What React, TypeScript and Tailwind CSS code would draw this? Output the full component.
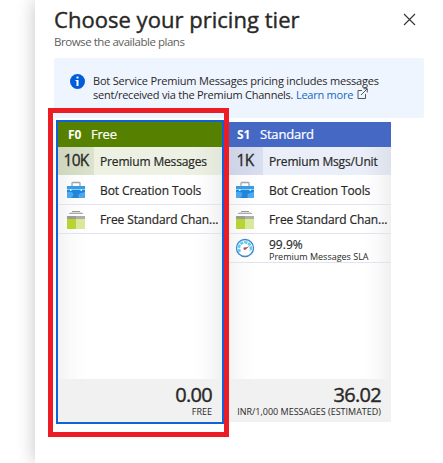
import type { ReactNode } from "react";

function Toolbox() {
  return (
    <svg width="20" height="18" viewBox="0 0 20 18" className="block">
      <path d="M6 5V2.2Q6 1.5 6.8 1.5H13.2Q14 1.5 14 2.2V5" fill="none" stroke="#a2a5a8" strokeWidth="1.3" />
      <rect x="1" y="5" width="18" height="12" fill="#2384d8" />
      <rect x="1" y="5" width="18" height="3" fill="#379bea" />
      <rect x="1" y="8" width="18" height="1" fill="#83d6fb" />
      <path d="M1 11Q5 10 7 12Q8 15 5 17H1Z" fill="#4ba9f1" />
      <path d="M13 17Q11 13 15 12L19 11V17Z" fill="#4ba9f1" />
      <path d="M4 8h1.5v2H4zM14.5 8H16v2h-1.5z" fill="#c7edff" />
    </svg>
  );
}

function Channels() {
  return (
    <svg width="20" height="19" viewBox="0 0 20 19" className="block">
      <rect x="6" y="1" width="8" height="1" fill="#999" />
      <rect x="4" y="2" width="12" height="1" fill="#ddd" />
      <rect x="3" y="3" width="14" height="1" fill="#aaa" />
      <rect x="1" y="6" width="18" height="3" fill="#9b9c96" />
      <rect x="10" y="6" width="9" height="3" fill="#adaea8" />
      <rect x="1" y="9" width="9" height="10" fill="#b8d432" />
      <rect x="10" y="9" width="9" height="10" fill="#d8e998" />
    </svg>
  );
}

function Gauge() {
  return (
    <svg width="20" height="20" viewBox="0 0 20 20" className="block">
      <circle cx="10" cy="10" r="8.5" fill="#fff" stroke="#3a86cf" strokeWidth="1.3" />
      <path d="M5.1 13.8A6 6 0 1 1 15.2 13" fill="none" stroke="#5ccdee" strokeWidth="2.6" strokeDasharray="3.2 .9" />
      <path d="M9 10.2L14.7 8L10.6 11.6Z" fill="#d83a43" />
      <circle cx="9.8" cy="10.6" r="1.3" fill="#b64b5a" />
    </svg>
  );
}

function Feature({ icon, children }: { icon: ReactNode; children: ReactNode }) {
  return (
    <div className="flex h-[29px] items-center border-b border-[#e3e3f0]">
      <div className="flex w-9 shrink-0 justify-center">{icon}</div>
      <div className="ml-[6px] whitespace-nowrap text-[12px] leading-4">{children}</div>
    </div>
  );
}

type TierProps = {
  code: string;
  name: string;
  header: string;
  band: string;
  quantityBand: string;
  quantity: string;
  unit: string;
  price: string;
  note: string;
  sla?: boolean;
  selected?: boolean;
};

function Tier(p: TierProps) {
  return (
    <section className={`flex h-[300px] w-[164px] shrink-0 flex-col bg-white ${p.selected ? "outline-2 outline-[#0f62d8]" : ""}`}>
      <header className={`flex h-[25px] shrink-0 items-center pl-[10px] text-white ${p.header}`}>
        <span className="w-[23px] pt-px text-[12px] font-bold">{p.code}</span>
        <span className="pt-px text-[13px] tracking-[-0.2px] [-webkit-text-stroke:0.2px]">{p.name}</span>
      </header>
      <div className="flex-1 bg-[linear-gradient(90deg,#f3f3f3_0,#fafafa_12px,#fff_28px,#fff_136px,#fafafa_150px,#f0f0f0_100%)]">
        <div className={`mb-px flex h-7 items-center ${p.band}`}>
          <div className={`flex h-full w-9 items-center justify-center text-[15.5px] tracking-[-0.8px] [-webkit-text-stroke:0.3px] ${p.quantityBand}`}>{p.quantity}</div>
          <div className="ml-[6px] whitespace-nowrap pt-px text-[12px] tracking-[-0.15px] [-webkit-text-stroke:0.2px]">{p.unit}</div>
        </div>
        <Feature icon={<Toolbox />}>
          <div className="pt-px tracking-[-0.1px] [-webkit-text-stroke:0.2px]">Bot Creation Tools</div>
        </Feature>
        <Feature icon={<Channels />}>
          <div className="pt-px tracking-[-0.1px] [-webkit-text-stroke:0.2px]">Free Standard Chan...</div>
        </Feature>
        {p.sla && (
          <Feature icon={<Gauge />}>
            <div className="pt-[3px] text-[12px] leading-[13px] [-webkit-text-stroke:0.15px]">99.9%</div>
            <div className="text-[9px] leading-[11px]">Premium Messages SLA</div>
          </Feature>
        )}
      </div>
      <footer className="flex h-[43px] shrink-0 flex-col items-end whitespace-nowrap bg-[#f1f1f1] pr-[10px] pt-[4px]">
        <div className="text-[20px] leading-[24px] tracking-[-0.7px] [-webkit-text-stroke:0.4px]">{p.price}</div>
        <div className="text-[9px] leading-[10px]">{p.note}</div>
      </footer>
    </section>
  );
}

export default function App() {
  return (
    <div className="relative h-[463px] w-[443px] overflow-hidden bg-white pl-[35px] font-['Open_Sans','Noto_Sans',sans-serif] text-[#292827]">
      <main className="h-full bg-white pl-[19px] shadow-[0_0_18px_rgba(0,0,0,0.24)]">
        <div className="flex h-[33px] items-start justify-between pr-[27px] pt-1">
          <h1 className="whitespace-nowrap text-[22px] leading-[30px] tracking-[0.03px] [-webkit-text-stroke:0.4px]">Choose your pricing tier</h1>
          <svg width="13" height="13" viewBox="0 0 13 13" className="mt-[9px]">
            <path d="M1 1L12 12M12 1L1 12" stroke="#333" strokeWidth="1.1" />
          </svg>
        </div>
        <p className="h-[25px] text-[11.5px] leading-[18px] tracking-[-0.46px] text-[#605e5c]">Browse the available plans</p>
        <div className="flex h-[60px] w-[370px] rounded-[2px] bg-[#eff5ff] pl-4 pt-4">
          <svg width="15" height="15" viewBox="0 0 15 15" className="shrink-0">
            <circle cx="7.5" cy="7.5" r="7.5" fill="#015cda" />
            <rect x="6.5" y="2.5" width="2" height="2" fill="#fff" />
            <path d="M5.5 6h3v6h-2V7h-1z" fill="#fff" />
          </svg>
          <div className="ml-2 whitespace-nowrap text-[11px] leading-[14px] tracking-[-0.19px]">
            <div>Bot Service Premium Messages pricing includes messages</div>
            <div className="flex tracking-[-0.24px]">
              <span>sent/received via the Premium Channels.&nbsp;</span>
              <span className="text-[#1068bf]">Learn more</span>
              <svg width="11" height="11" viewBox="0 0 11 11" className="ml-1">
                <path d="M5 2.5H1V10.5H8.5V6M4 7L10 1M6.5 .7H10.3V4.5" fill="none" stroke="#444" strokeWidth="0.9" />
              </svg>
            </div>
          </div>
        </div>
        <div className="ml-1 mt-1 flex gap-[5px]">
          <Tier
            selected
            code="F0"
            name="Free"
            header="bg-[#568000]"
            band="bg-[linear-gradient(90deg,#ecf1e2_0,#edf1e3_136px,#e3e7d9_100%)]"
            quantityBand="bg-[linear-gradient(90deg,#cfd6bd,#dce3cc)]"
            quantity="10K"
            unit="Premium Messages"
            price="0.00"
            note="FREE"
          />
          <Tier
            sla
            code="S1"
            name="Standard"
            header="bg-[#4668c5]"
            band="bg-[linear-gradient(90deg,#e9eef8_0,#e9eef8_136px,#dde1eb_100%)]"
            quantityBand="bg-[linear-gradient(90deg,#cdd3e5,#d9dff1)]"
            quantity="1K"
            unit="Premium Msgs/Unit"
            price="36.02"
            note="INR/1,000 MESSAGES (ESTIMATED)"
          />
        </div>
      </main>
      <div className="pointer-events-none absolute left-[48px] top-[108px] h-[329px] w-[181px] border-[5px] border-[#ed1c24]" />
    </div>
  );
}
